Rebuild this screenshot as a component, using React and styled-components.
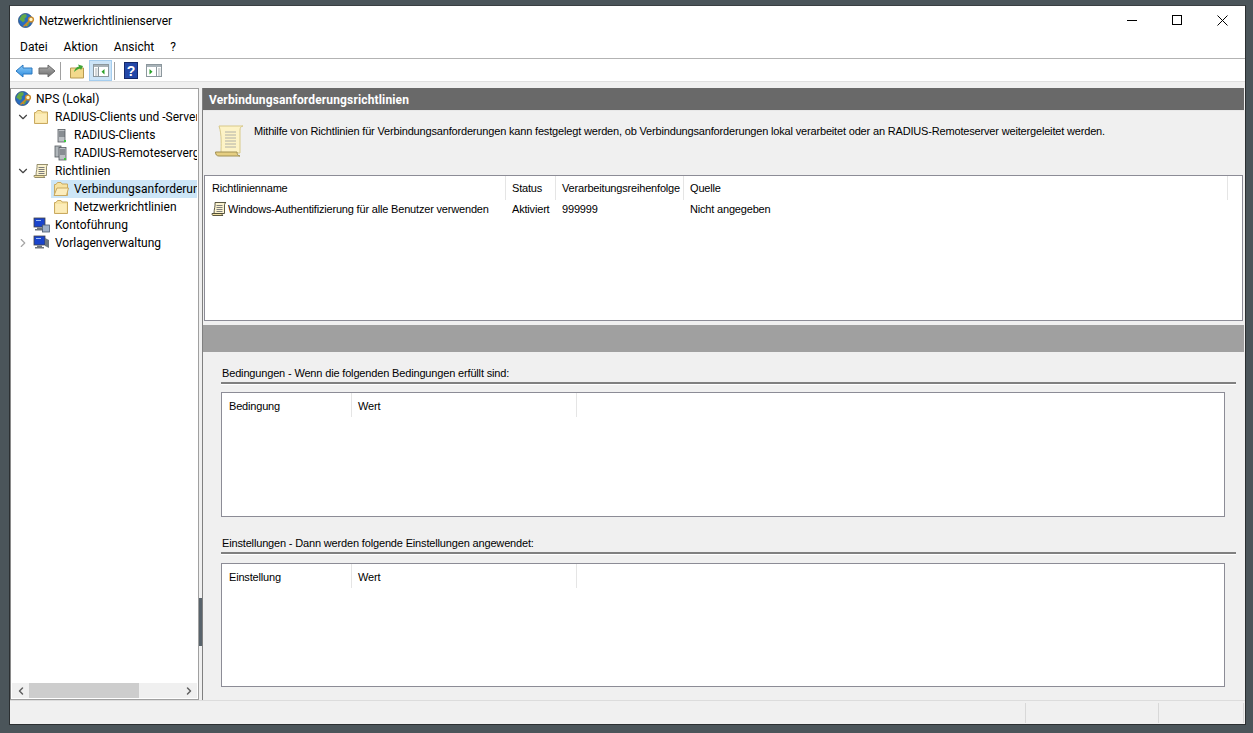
import React from "react"
import styled, { createGlobalStyle } from "styled-components"
import { ChevronDown, ChevronRight, ChevronLeft } from "lucide-react"

const Global = createGlobalStyle`
  html, body { margin: 0; padding: 0; height: 100%; background: #4b555a; overflow: hidden; }
  #root { height: 100%; }
  * { box-sizing: border-box; }
`

const Desktop = styled.div`
  height: 733px;
  padding: 5px 7px 8px 9px;
`
const Win = styled.div`
  height: 720px;
  background: #f0f0f0;
  border: 1px solid #2b2f31;
  border-top-color: #3a3f42;
  display: flex;
  flex-direction: column;
  font-family: Roboto, "Noto Sans", sans-serif;
  font-size: 12px;
  color: #000;
`
const TitleBar = styled.div`
  height: 30px;
  background: #fff;
  display: flex;
  align-items: center;
  padding: 0 0 1px 8px;
  flex: none;
`
const TitleText = styled.span`
  margin-left: 4px;
  letter-spacing: -0.1px;
  flex: 1;
`
const WinBtn = styled.div`
  width: 45px;
  height: 30px;
  display: flex;
  align-items: center;
  justify-content: center;
`
const MenuBar = styled.div`
  height: 23px;
  background: #fff;
  border-bottom: 1px solid #b3b3b3;
  display: flex;
  align-items: center;
  padding: 0 0 0 10px;
  gap: 16px;
  flex: none;
`
const ToolBar = styled.div`
  height: 23px;
  background: #fff;
  border-bottom: 1px solid #e0e0e0;
  display: flex;
  align-items: center;
  padding: 1px 0 0 2px;
  flex: none;
`
const ToolBtn = styled.div`
  width: 23px;
  height: 21px;
  margin-left: ${p => p.$active ? 1 : 0}px;
  display: flex;
  align-items: center;
  justify-content: center;
  background: ${p => p.$active ? "#cce4f7" : "transparent"};
  border: 1px solid ${p => p.$active ? "#a5cdee" : "transparent"};
`
const ToolSep = styled.div`
  width: 1px;
  height: 18px;
  background: #a0a0a0;
  margin: 0 4px 0 2px;
`
const Main = styled.div`
  flex: 1;
  min-height: 0;
  display: flex;
  padding-top: 6px;
`
const TreePane = styled.div`
  width: 189px;
  flex: none;
  background: #fff;
  border: 1px solid #a0a0a0;
  border-left-color: #8a8a8a;
  display: flex;
  flex-direction: column;
  padding-top: 1px;
`
const Tree = styled.div`
  flex: 1;
  overflow: hidden;
  margin-right: 1px;
`
const TreeRow = styled.div`
  height: 18px;
  display: flex;
  align-items: center;
  padding-left: ${p => p.$indent}px;
  white-space: nowrap;
  overflow: hidden;
`
const Expander = styled.span`
  width: 16px;
  height: 16px;
  flex: none;
  display: flex;
  align-items: center;
  justify-content: center;
  color: ${p => p.$open ? "#444" : "#a6a6a6"};
`
const IconBox = styled.span`
  width: 20px;
  height: 18px;
  flex: none;
  display: flex;
  align-items: center;
  justify-content: flex-start;
`
const RowBody = styled.span`
  display: flex;
  align-items: center;
  height: 18px;
  flex: 1;
  background: ${p => p.$selected ? "#cde6f7" : "transparent"};
  padding-left: 2px;
`
const RowLabel = styled.span`
  margin-left: ${p => p.$top ? 2 : 1}px;
`
const HScroll = styled.div`
  height: 15px;
  margin: 0 1px 1px 1px;
  background: #f0f0f0;
  display: flex;
  align-items: center;
  color: #606060;
  flex: none;
`
const ScrollArrow = styled.span`
  width: 17px;
  height: 15px;
  display: flex;
  align-items: center;
  justify-content: center;
  flex: none;
`
const ScrollThumb = styled.div`
  width: 110px;
  height: 15px;
  background: #cdcdcd;
  flex: none;
`
const ScrollRest = styled.div`
  flex: 1;
`
const Splitter = styled.div`
  width: 4px;
  flex: none;
  position: relative;
`
const Grip = styled.div`
  position: absolute;
  left: 0;
  top: 510px;
  width: 3px;
  height: 48px;
  background: #58636b;
`
const Right = styled.div`
  flex: 1;
  min-width: 0;
  margin-right: 1px;
  margin-left: -1px;
  display: flex;
  flex-direction: column;
  border-left: 1px solid #808080;
`
const PaneHeader = styled.div`
  height: 22px;
  flex: none;
  background: #696969;
  color: #fff;
  font-weight: 700;
  letter-spacing: 0.15px;
  display: flex;
  align-items: center;
  padding: 2px 0 0 6px;
`
const Intro = styled.div`
  height: 65px;
  flex: none;
  display: flex;
  padding: 14px 0 0 12px;
  border-top: 1px solid #e8e8e8;
`
const IntroText = styled.div`
  font-family: "Liberation Sans", Arial, sans-serif;
  font-size: 11px;
  letter-spacing: -0.17px;
  line-height: 14px;
  margin: -1px 0 0 10px;
`
const ListBox = styled.div`
  background: #fff;
  border: 1px solid #8c8c96;
  height: ${p => p.$h}px;
  margin: ${p => p.$m};
  flex: none;
  font-family: "Liberation Sans", Arial, sans-serif;
  font-size: 11px;
  letter-spacing: -0.18px;
`
const HeaderRow = styled.div`
  height: 24px;
  display: flex;
`
const Col = styled.div`
  width: ${p => p.$w}px;
  flex: none;
  height: 24px;
  padding: ${p => p.$top || 6}px 0 0 ${p => p.$pad || 6}px;
  border-right: 1px solid #e5e5e5;
  white-space: nowrap;
`
const DataRow = styled.div`
  display: flex;
  height: 18px;
  align-items: center;
`
const Cell = styled.div`
  width: ${p => p.$w}px;
  flex: none;
  padding-left: ${p => p.$pad || 6}px;
  display: flex;
  align-items: center;
  gap: 1px;
  white-space: nowrap;
`
const Band = styled.div`
  height: 27px;
  flex: none;
  background: #a0a0a0;
  margin-top: 4px;
`
const SectionTitle = styled.div`
  font-family: "Liberation Sans", Arial, sans-serif;
  font-size: 11px;
  letter-spacing: -0.16px;
  margin: ${p => p.$top}px 8px 0 18px;
  height: 19px;
  padding: 2px 0 0 1px;
  border-bottom: 2px solid #808080;
  box-shadow: 0 1px 0 #fff;
`
const StatusBar = styled.div`
  height: 24px;
  flex: none;
  border-top: 1px solid #dcdcdc;
  display: flex;
  justify-content: flex-end;
  padding-right: 1px;
`
const StatusCell = styled.div`
  width: ${p => p.$w}px;
  height: 20px;
  flex: none;
  border-left: 1px solid #d8d8d8;
  margin-top: 2px;
`
const StatusEnd = styled.div`
  width: 1px;
  height: 20px;
  flex: none;
  margin-top: 2px;
  background: #d8d8d8;
`

const Globe = () => (
  <svg width="17" height="16" viewBox="0 0 17 16">
    <circle cx="7.5" cy="7.5" r="7" fill="#2a6cc0" stroke="#24497a" strokeWidth="0.8" />
    <path d="M3.5 2.5 C5 1.2 7 1 8.5 1.5 L8.5 4 L6.5 5.5 L7 7.5 L5 9.5 L3.5 8 L1.2 6.5 Z" fill="#62a848" />
    <path d="M8 10.5 L10.5 9.5 L11.5 10.5 L9.5 13.5 L8 13 Z" fill="#62a848" />
    <circle cx="13" cy="6.5" r="2.4" fill="#fff3c4" stroke="#c98a2b" strokeWidth="1.4" />
    <path d="M11.2 8.2 L5.5 13.5 M7.5 11.5 L9 13" stroke="#c98a2b" strokeWidth="1.6" fill="none" />
  </svg>
)
const Folder = ({ open }) => (
  <svg width="16" height="16" viewBox="0 0 16 16">
    <path d="M1.5 3.5 H3 L4.5 1.5 H8 L9 3 H14.5 V14.5 H1.5 Z" fill="#f7e3a1" stroke="#c9a960" strokeWidth="1" />
    {open && <path d="M4 7 H15.5 L13.5 14.5 H1 Z" fill="#fcedbd" stroke="#c9a960" strokeWidth="1" />}
    {!open && <path d="M2.5 5 H13.5 V13.5 H2.5 Z" fill="#fcecb9" />}
  </svg>
)
const Scroll = ({ dark }) => (
  <svg width="16" height="16" viewBox="0 0 16 16">
    <path d="M4 1.5 H15 C14 2 13.5 3 13.5 4 V12.5 H3 C3 8 4.5 5 4 1.5 Z" fill="#fbf3cf" stroke={dark ? "#4a4630" : "#8a8260"} strokeWidth="0.9" />
    <path d="M1 12.5 H11 C11 13.5 11.5 14.5 12 14.5 H2 C1.3 14.5 1 13.5 1 12.5 Z" fill="#f0dfa0" stroke={dark ? "#4a4630" : "#8a8260"} strokeWidth="0.9" />
    <path d="M5.5 4.5 H11.5 M5.5 6.5 H11.5 M5.5 8.5 H11.5 M5.5 10.5 H11.5" stroke="#7c7c7c" strokeWidth="1" />
  </svg>
)
const BigScroll = () => (
  <svg width="29" height="33" viewBox="0 0 29 33">
    <path d="M4 1 H28 C26 1 25 3 25 5 V28 H6 C6 20 7 10 4 1 Z" fill="#fdf3c6" stroke="#d8c98a" />
    <path d="M.5 27 H22 C22 29 23 31 25 31 H4 C2 31 .5 30 .5 27 Z" fill="#e6cf82" stroke="#a08f52" />
    <path d="M10 7 H21 M10 10 H21 M10 13 H21 M10 16 H21 M10 19 H21 M10 22 H21" stroke="#b0b0a8" strokeWidth="1" />
  </svg>
)
const Server = ({ twin }) => (
  <svg width="16" height="16" viewBox="0 0 16 16">
    {twin && <rect x="2" y="1" width="6" height="11" fill="#b0b6ba" stroke="#555b60" strokeWidth="0.8" />}
    <rect x={twin ? 6 : 5} y="2.5" width="7" height="12.5" fill="#bcc0c4" stroke="#555b60" strokeWidth="0.8" />
    <path d={twin ? "M7 5 H12 M7 7 H12 M7 9 H12" : "M6 5 H12 M6 7 H12 M6 9 H12"} stroke="#555b60" strokeWidth="1" />
    <rect x="11" y="13" width="2" height="2" fill="#3cc83c" />
  </svg>
)
const Computers = ({ gear }) => (
  <svg width="18" height="16" viewBox="0 0 18 16">
    <rect x="1" y="1" width="11" height="9" fill="#1a44cc" stroke="#444" strokeWidth="0.8" />
    <path d="M3 3 H8 V4 H3 Z" fill="#9fc0f5" />
    <path d="M4 10.5 H9 V12 H11 V13.5 H2 V12 H4 Z" fill="#6e747a" />
    {gear
      ? <rect x="9.5" y="8" width="7" height="7" fill="#9fb0c8" stroke="#4a5a70" strokeWidth="0.8" />
      : <path d="M12 3 L16 5 V13 L12 11 Z" fill="#6e7880" />}
  </svg>
)
const ArrowBtn = ({ dir, id, from, to, stroke }) => (
  <svg width="18" height="16" viewBox="0 0 18 16">
    <defs>
      <linearGradient id={id} x1="0" y1="0" x2="0" y2="1">
        <stop offset="0" stopColor={from} />
        <stop offset="1" stopColor={to} />
      </linearGradient>
    </defs>
    <path
      d={dir === "left"
        ? "M1 8 L8 2 V5 H17 V11 H8 V14 Z"
        : "M17 8 L10 2 V5 H1 V11 H10 V14 Z"}
      fill={`url(#${id})`}
      stroke={stroke}
      strokeWidth="1"
    />
  </svg>
)
const UpFolder = () => (
  <svg width="16" height="16" viewBox="0 0 16 16">
    <path d="M1.5 5 H14.5 V15 H1.5 Z" fill="#f3d98c" stroke="#b89a50" />
    <path d="M5 9 C6 5 8 4 10 3.5 L9 1.5 L14 3 L12 7 L11 5.5 C9 6 7 7 5 9 Z" fill="#3fa535" />
  </svg>
)
const PaneToggle = ({ side }) => (
  <svg width="16" height="13" viewBox="0 0 16 13">
    <rect x="0.5" y="0.5" width="15" height="12" fill="#fff" stroke="#8c979d" />
    <rect x="1" y="1" width="14" height="2" fill="#a8b2b8" />
    <path d={side === "left" ? "M5.5 3 V12" : "M10.5 3 V12"} stroke="#8c979d" />
    <path d={side === "left" ? "M11.5 5 V10.5 L8.5 7.7 Z" : "M3.5 5 V10.5 L6.5 7.7 Z"} fill="#28a028" />
    <path d={side === "left"
      ? "M2 5 H4.5 M2 7 H4.5 M2 9 H4.5 M2 11 H4.5"
      : "M12 5 H14.5 M12 7 H14.5 M12 9 H14.5 M12 11 H14.5"} stroke="#a8b0b4" />
  </svg>
)
const HelpIcon = () => (
  <svg width="14" height="17" viewBox="0 0 14 17">
    <rect x="0.5" y="0.5" width="13" height="16" fill="#2348a8" stroke="#14286a" />
    <text x="7" y="13.5" textAnchor="middle" fontFamily="Liberation Sans" fontWeight="700" fontSize="14" fill="#fff">?</text>
  </svg>
)

const treeRows = [
  { indent: 2, icon: <Globe />, label: "NPS (Lokal)" },
  { indent: 4, exp: "open", icon: <Folder />, label: "RADIUS-Clients und -Server", top: true },
  { indent: 40, icon: <Server />, label: "RADIUS-Clients" },
  { indent: 40, icon: <Server twin />, label: "RADIUS-Remoteservergruppen" },
  { indent: 4, exp: "open", icon: <Scroll />, label: "Richtlinien", top: true },
  { indent: 40, icon: <Folder open />, label: "Verbindungsanforderungsrichtlinien", selected: true },
  { indent: 40, icon: <Folder />, label: "Netzwerkrichtlinien" },
  { indent: 20, icon: <Computers gear />, label: "Kontoführung", top: true },
  { indent: 4, exp: "closed", icon: <Computers />, label: "Vorlagenverwaltung", top: true },
]

const Section = ({ title, top, first, height, gap }) => (
  <>
    <SectionTitle $top={top}>{title}</SectionTitle>
    <ListBox $h={height} $m={`${gap}px 19px 0 18px`}>
      <HeaderRow>
        <Col $w={130} $pad={7} $top={7}>{first}</Col>
        <Col $w={225} $top={7}>Wert</Col>
      </HeaderRow>
    </ListBox>
  </>
)

export default function App() {
  return (
    <>
      <Global />
      <Desktop>
        <Win>
          <TitleBar>
            <Globe />
            <TitleText>Netzwerkrichtlinienserver</TitleText>
            <WinBtn>
              <svg width="11" height="11" viewBox="0 0 11 11"><path d="M0 5.5 H10" stroke="#000" /></svg>
            </WinBtn>
            <WinBtn>
              <svg width="11" height="11" viewBox="0 0 11 11"><rect x="0.5" y="0.5" width="9" height="9" fill="none" stroke="#000" /></svg>
            </WinBtn>
            <WinBtn>
              <svg width="11" height="11" viewBox="0 0 11 11"><path d="M0.5 0.5 L10.5 10.5 M10.5 0.5 L0.5 10.5" stroke="#000" /></svg>
            </WinBtn>
          </TitleBar>
          <MenuBar>
            <span>Datei</span>
            <span>Aktion</span>
            <span>Ansicht</span>
            <span>?</span>
          </MenuBar>
          <ToolBar>
            <ToolBtn><ArrowBtn dir="left" id="back" from="#8fcdf7" to="#2b8be0" stroke="#2a78c0" /></ToolBtn>
            <ToolBtn><ArrowBtn dir="right" id="fwd" from="#b0b0b0" to="#6e6e6e" stroke="#6a6a6a" /></ToolBtn>
            <ToolSep />
            <ToolBtn><UpFolder /></ToolBtn>
            <ToolBtn $active><PaneToggle side="left" /></ToolBtn>
            <ToolSep />
            <ToolBtn><HelpIcon /></ToolBtn>
            <ToolBtn><PaneToggle side="right" /></ToolBtn>
          </ToolBar>
          <Main>
            <TreePane>
              <Tree>
                {treeRows.map(r => (
                  <TreeRow key={r.label} $indent={r.indent}>
                    {r.exp && (
                      <Expander $open={r.exp === "open"}>
                        {r.exp === "open"
                          ? <ChevronDown size={14} strokeWidth={2} />
                          : <ChevronRight size={14} strokeWidth={2} />}
                      </Expander>
                    )}
                    <RowBody $selected={r.selected}>
                      <IconBox>{r.icon}</IconBox>
                      <RowLabel $top={r.top}>{r.label}</RowLabel>
                    </RowBody>
                  </TreeRow>
                ))}
              </Tree>
              <HScroll>
                <ScrollArrow><ChevronLeft size={12} strokeWidth={3} /></ScrollArrow>
                <ScrollThumb />
                <ScrollRest />
                <ScrollArrow><ChevronRight size={12} strokeWidth={3} /></ScrollArrow>
              </HScroll>
            </TreePane>
            <Splitter><Grip /></Splitter>
            <Right>
              <PaneHeader>Verbindungsanforderungsrichtlinien</PaneHeader>
              <Intro>
                <BigScroll />
                <IntroText>Mithilfe von Richtlinien für Verbindungsanforderungen kann festgelegt werden, ob Verbindungsanforderungen lokal verarbeitet oder an RADIUS-Remoteserver weitergeleitet werden.</IntroText>
              </Intro>
              <ListBox $h={146} $m="0 1px 0 1px">
                <HeaderRow>
                  <Col $w={301} $pad={7}>Richtlinienname</Col>
                  <Col $w={50}>Status</Col>
                  <Col $w={128}>Verarbeitungsreihenfolge</Col>
                  <Col $w={544}>Quelle</Col>
                </HeaderRow>
                <DataRow>
                  <Cell $w={301}><Scroll dark />Windows-Authentifizierung für alle Benutzer verwenden</Cell>
                  <Cell $w={50}>Aktiviert</Cell>
                  <Cell $w={128}>999999</Cell>
                  <Cell $w={300}>Nicht angegeben</Cell>
                </DataRow>
              </ListBox>
              <Band />
              <Section top={13} gap={8} height={125} title="Bedingungen - Wenn die folgenden Bedingungen erfüllt sind:" first="Bedingung" />
              <Section top={18} gap={9} height={124} title="Einstellungen - Dann werden folgende Einstellungen angewendet:" first="Einstellung" />
            </Right>
          </Main>
          <StatusBar>
            <StatusCell $w={133} />
            <StatusCell $w={85} />
            <StatusEnd />
          </StatusBar>
        </Win>
      </Desktop>
    </>
  )
}
